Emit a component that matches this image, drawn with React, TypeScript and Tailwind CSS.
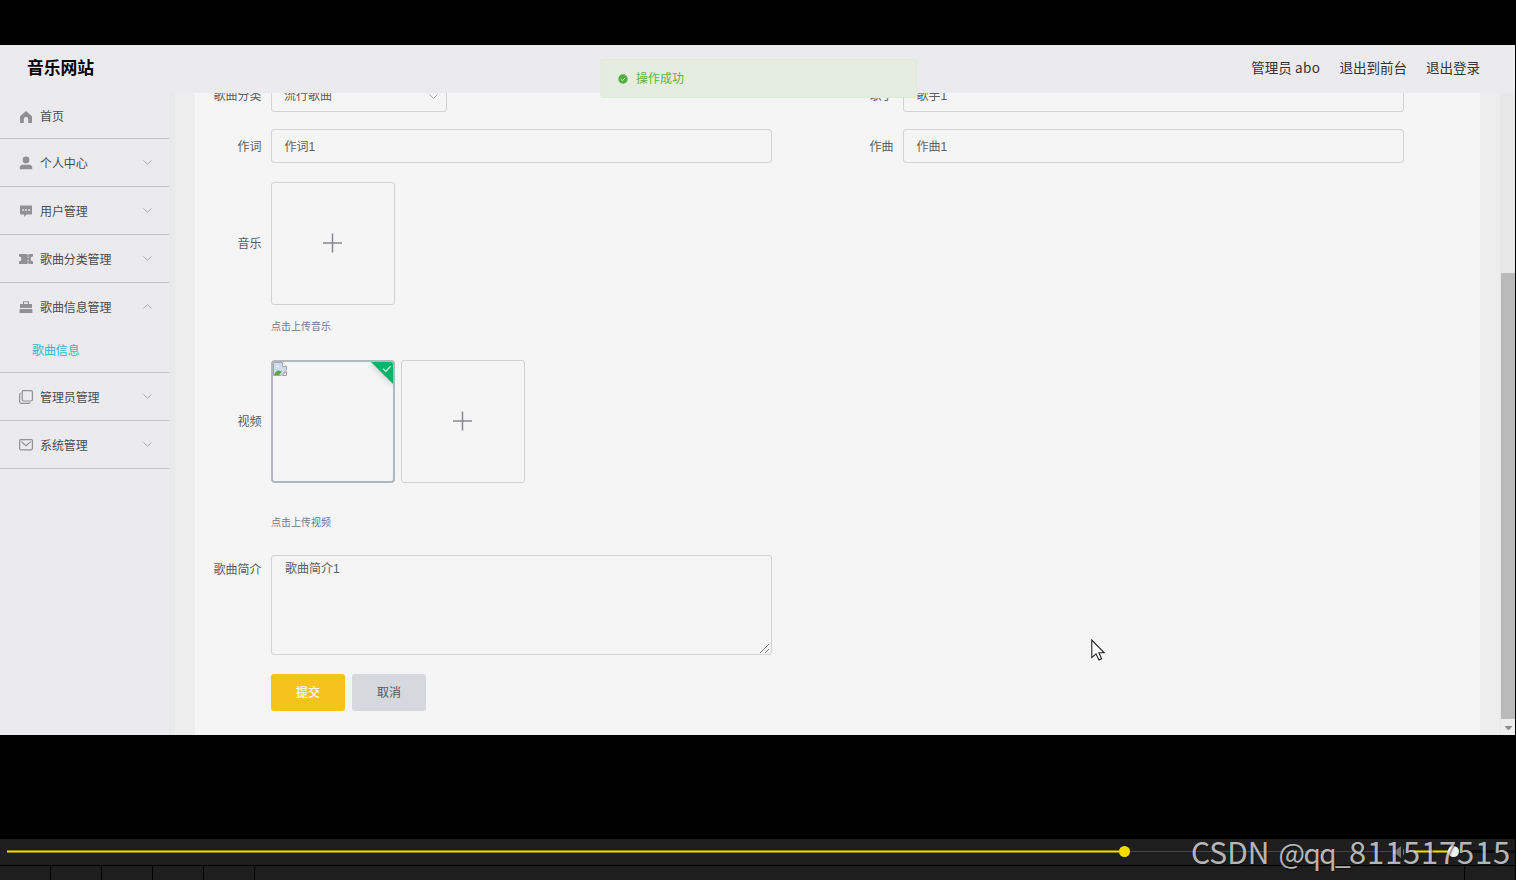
import type { ReactNode } from 'react';

type MenuItem = {
  label: string;
  icon: ReactNode;
  arrow?: 'up' | 'down';
  children?: string[];
};

const HomeIcon = () => (
  <svg className="mt-0.5 h-3.5 w-3.5" viewBox="0 0 14 14" fill="#919194">
    <path d="M7 1 L13 6.3 V13 H9.2 V9.3 a2.2 2.2 0 0 0-4.4 0 V13 H1 V6.3 Z" />
  </svg>
);

const UserIcon = () => (
  <svg className="mt-px h-3.5 w-3.5" viewBox="0 0 14 14" fill="#919194">
    <circle cx="7" cy="3.9" r="3.4" />
    <path d="M.8 13.2 V11.6 Q.8 8.8 4 8.8 H10 Q13.2 8.8 13.2 11.6 V13.2 Z" />
  </svg>
);

const CommentIcon = () => (
  <svg className="mt-px h-3.5 w-3.5" viewBox="0 0 14 14">
    <path d="M1 1.6 H13 V10.6 H7.6 L5.2 13 V10.6 H1 Z" fill="#919194" />
    <circle cx="4" cy="6" r=".9" fill="#ebebed" />
    <circle cx="7" cy="6" r=".9" fill="#ebebed" />
    <circle cx="10" cy="6" r=".9" fill="#ebebed" />
  </svg>
);

const TicketIcon = () => (
  <svg className="h-3.5 w-3.5" viewBox="0 0 14 14">
    <path d="M0 2 H8.6 V3.4 H9.6 V2 H14 V4.6 a2.2 2.2 0 0 0 0 4.8 V12 H9.6 V10.6 H8.6 V12 H0 V9.4 a2.4 2.4 0 0 0 0-4.8 Z" fill="#919194" />
    <path d="M9.1 4.6 V6.2 M9.1 7.8 V9.4" stroke="#ebebed" />
  </svg>
);

const BriefcaseIcon = () => (
  <svg className="h-3.5 w-3.5" viewBox="0 0 14 14">
    <path d="M4.5 4 V1.8 H9.5 V4" fill="none" stroke="#919194" strokeWidth="1.1" />
    <path d="M1 4 H13 V8 H1 Z M.6 8.9 H13.4 V13 H.6 Z" fill="#919194" />
  </svg>
);

const CopyIcon = () => (
  <svg className="h-3.5 w-3.5" viewBox="0 0 14 14" fill="none" stroke="#919194" strokeWidth="1.2">
    <rect x="3.2" y=".6" width="10.2" height="10.4" rx="1.4" />
    <path d="M1.8 3 Q.6 3.2 .6 4.6 V11.6 Q.6 13.4 2.4 13.4 H9.6 Q10.8 13.4 11.2 12.6" />
  </svg>
);

const MailIcon = () => (
  <svg className="h-3.5 w-3.5" viewBox="0 0 14 14" fill="none" stroke="#919194" strokeWidth="1.2">
    <rect x=".6" y="1.6" width="12.8" height="10.2" rx="1.2" />
    <path d="M2.2 3.6 L7 7.8 L11.8 3.6" />
  </svg>
);

const menu: MenuItem[] = [
  { label: '首页', icon: <HomeIcon /> },
  { label: '个人中心', icon: <UserIcon />, arrow: 'down' },
  { label: '用户管理', icon: <CommentIcon />, arrow: 'down' },
  { label: '歌曲分类管理', icon: <TicketIcon />, arrow: 'down' },
  { label: '歌曲信息管理', icon: <BriefcaseIcon />, arrow: 'up', children: ['歌曲信息'] },
  { label: '管理员管理', icon: <CopyIcon />, arrow: 'down' },
  { label: '系统管理', icon: <MailIcon />, arrow: 'down' },
];

function Chevron({ up = false }: { up?: boolean }) {
  return (
    <svg className="h-[5px] w-[9px]" viewBox="0 0 9 5" fill="none" stroke="#a3a4a8" strokeWidth=".9">
      <path d={up ? 'M.5 4.5 L4.5 .6 L8.5 4.5' : 'M.5 .5 L4.5 4.4 L8.5 .5'} />
    </svg>
  );
}

function Sidebar() {
  return (
    <aside className="w-[169px] shrink-0 bg-[#ebebed]">
      {menu.map((item, i) => (
        <div key={item.label} className="border-b border-[#c3c3c5]">
          <div className={`flex items-center pl-[19px] pr-[17px] ${i === 0 ? 'h-[45px]' : 'h-[47px]'}`}>
            {item.icon}
            <span className="ml-[7px] flex-1 pt-0.5 tracking-[-0.1px] text-[#4c4c4f]">{item.label}</span>
            {item.arrow && <Chevron up={item.arrow === 'up'} />}
          </div>
          {item.children?.map((child) => (
            <div key={child} className="flex h-[42px] items-center pl-8 tracking-[-0.1px] text-[#2bbcc4]">
              {child}
            </div>
          ))}
        </div>
      ))}
    </aside>
  );
}

function Field({ label, children, top = false }: { label: string; children: ReactNode; top?: boolean }) {
  return (
    <div className={`flex w-[632px] ${top ? 'items-start' : 'items-center'}`}>
      <label className={`mr-[9.5px] w-[66.5px] shrink-0 text-right text-[#5b5c5f] ${top ? 'pt-1.5' : 'pt-px'}`}>{label}</label>
      {children}
    </div>
  );
}

function TextInput({ value }: { value: string }) {
  return (
    <div className="flex h-[34px] w-[501px] items-center rounded-[3px] border border-[#d3d2d4] px-[12.5px] pt-0.5 text-[#5d5e61]">
      {value}
    </div>
  );
}

function UploadBox() {
  return (
    <div className="flex h-[123px] w-[124px] items-center justify-center rounded-[3px] border border-[#d3d1d4]">
      <svg className="mb-px h-5 w-5" viewBox="0 0 20 20" fill="none" stroke="#87898f" strokeWidth="1.5">
        <path d="M9.5 .5 V19.5 M0 10 H19" />
      </svg>
    </div>
  );
}

function UploadedFile() {
  return (
    <div className="relative h-[123px] w-[124px] overflow-hidden rounded-[4px] border-2 border-[#b3b7bd]">
      {/* broken preview */}
      <svg className="h-[14px] w-[14px]" viewBox="0 0 14 14">
        <path d="M.5 .5 H9.5 L13.5 4.5 V8 L8 13.5 H.5 Z" fill="#cfdcf5" stroke="#a4a6aa" />
        <path d="M1 13 Q3 8 6 8.5 L9 9.5 L6 13 Z" fill="#5aa83f" />
        <path d="M3 5 Q4.5 2.5 6 5 Z" fill="#fff" />
        <path d="M9.5 .5 V4.5 H13.5" fill="#fff" stroke="#a4a6aa" />
        <path d="M9 13.5 H13.5 V9.5 Z" fill="#f5f5f5" stroke="#a4a6aa" />
      </svg>
      <svg className="absolute right-0 top-0 h-[22px] w-[22px] drop-shadow-[0_1px_3px_rgba(0,0,0,0.2)]" viewBox="0 0 22 22">
        <path d="M0 0 H22 V22 Z" fill="#0bb36a" />
        <path d="M12 6.6 L14.8 9.4 L19.6 4.2" fill="none" stroke="#d9f6e8" strokeWidth="1.2" />
      </svg>
    </div>
  );
}

function SongForm() {
  return (
    <div className="w-[1285px] bg-[#f5f5f5]">
      <div className="-mt-[15px] flex">
        <Field label="歌曲分类">
          <div className="flex h-[34px] w-[176px] items-center justify-between rounded-[3px] border border-[#d3d2d4] pl-3 pr-2 pt-0.5 text-[#5d5e61]">
            流行歌曲
            <Chevron />
          </div>
        </Field>
        <Field label="歌手">
          <TextInput value="歌手1" />
        </Field>
      </div>

      <div className="mt-[17px] flex">
        <Field label="作词">
          <TextInput value="作词1" />
        </Field>
        <Field label="作曲">
          <TextInput value="作曲1" />
        </Field>
      </div>

      <div className="mt-[19px]">
        <Field label="音乐">
          <UploadBox />
        </Field>
        <p className="ml-[76px] mt-[14px] text-[10px] leading-[16px] text-[#6f7890]">点击上传音乐</p>
      </div>

      <div className="mt-[25px]">
        <Field label="视频">
          <div className="flex gap-1.5">
            <UploadedFile />
            <UploadBox />
          </div>
        </Field>
        <p className="ml-[76px] mt-8 text-[10px] leading-[16px] text-[#6f7890]">点击上传视频</p>
      </div>

      <div className="mt-6">
        <Field label="歌曲简介" top>
          <div className="relative h-[100px] w-[501px] rounded-[3px] border border-[#d3d2d4] px-[13px] pt-1 text-[#5d5e61]">
            歌曲简介1
            <svg className="absolute bottom-px right-0.5 h-[9px] w-[9px]" viewBox="0 0 9 9" stroke="#6c6c6c" strokeWidth=".9">
              <path d="M0 9 L9 0 M5 9 L9 5" />
            </svg>
          </div>
        </Field>
      </div>

      <div className="ml-[76px] mt-[19px] flex gap-[7px]">
        <button className="h-[37px] w-[74px] rounded-[3px] bg-[#f6c21d] font-medium text-white">提交</button>
        <button className="h-[37px] w-[74px] rounded-[3px] bg-[#d5d8dc] text-[#55565a]">取消</button>
      </div>
    </div>
  );
}

function Toast() {
  return (
    <div className="absolute left-[600px] top-[14px] flex h-[39px] w-[317px] items-center rounded-[3px] border border-[#dfebd9] bg-[#e5ede0] pl-[17px] text-[#5cb447]">
      <svg className="mr-2 h-[10px] w-[10px]" viewBox="0 0 10 10">
        <circle cx="5" cy="5" r="4.7" fill="#4fb03c" />
        <path d="M2.7 5.1 L4.4 6.7 L7.3 3.7" fill="none" stroke="#e5ede0" strokeWidth="1" />
      </svg>
      操作成功
    </div>
  );
}

function PlayerBar() {
  return (
    <div className="h-[41px] w-[1515px]">
      <div className="flex h-[26px] items-center bg-[#1e1e1e] pb-px pl-[7px]">
        <div className="h-[3px] w-[1112px] border-y border-[#8f8000] bg-[#f0dc00]" />
        <div className="h-[11px] w-[11px] rounded-full bg-[#f5dc00]" />
        <div className="h-px w-[262px] bg-[#484848]" />
        <svg className="h-3 w-4" viewBox="0 0 16 12" fill="#777">
          <path d="M1 4 H4 L9 0 V12 L4 8 H1 Z M11 3 H12 V9 H11 Z" />
        </svg>
        <div className="ml-1.5 h-[3px] w-[34px] border-y border-[#8f8000] bg-[#f0dc00]" />
        <div className="h-[11px] w-[11px] rounded-full bg-[#efefef]" />
        <div className="h-[3px] flex-1 bg-[#0d0d0d]" />
      </div>
      <div className="mt-px flex h-[14px] gap-px">
        {[0, 1, 2, 3, 4].map((n) => (
          <div key={n} className="w-[50px] bg-[#1e1e1e]" />
        ))}
        <div className="flex-1 bg-[#1e1e1e]" />
        <div className="w-[50px] bg-[#1e1e1e]" />
      </div>
    </div>
  );
}

export default function App() {
  return (
    <div className="relative flex h-[880px] w-[1516px] flex-col overflow-hidden bg-black pt-[45px] font-['Liberation_Sans','Noto_Sans_CJK_SC',sans-serif] text-[12px] leading-[18px]">
      <div className="relative flex h-[690px] w-[1515px] flex-col overflow-hidden bg-[#ededed]">
        <header className="flex h-12 shrink-0 items-center justify-between bg-[#ebebed] pb-1 pl-[27px] pr-[35px] font-['Noto_Sans_CJK_SC',sans-serif]">
          <h1 className="text-[16.8px] font-bold text-black">音乐网站</h1>
          <nav className="flex gap-[19px] text-[13.5px] text-[#333336]">
            <span>
              管理员 <span className="tracking-[0.5px]">abo</span>
            </span>
            <span>退出到前台</span>
            <span>退出登录</span>
          </nav>
        </header>

        <div className="flex min-h-0 flex-1">
          <Sidebar />
          <main className="flex flex-1 overflow-hidden border-l-[6px] border-[#e8eae9] pl-5">
            <SongForm />
          </main>
          <div className="flex w-[15px] flex-col bg-[#e7e7e7] pl-px">
            <div className="mt-[180px] h-[446px] bg-[#bababa]" />
            <svg className="h-4 w-[14px]" viewBox="0 0 14 16">
              <rect width="14" height="16" fill="#ededed" />
              <path d="M3.5 7 H11.5 L7.5 11.5 Z" fill="#8c8c8c" />
            </svg>
          </div>
        </div>

        <Toast />
        <svg className="absolute left-[1091px] top-[594px] h-[22px] w-[14px]" viewBox="0 0 14 22">
          <path d="M.8 1 V18.6 L5 14.8 L8 21 L10.6 19.8 L7.9 13.8 H13.2 Z" fill="#fff" stroke="#222" strokeWidth="1.1" />
        </svg>
      </div>

      <div className="h-[104px] shrink-0" />
      <PlayerBar />

      <div className="absolute left-[1191px] top-[831px] flex items-baseline whitespace-nowrap font-['Noto_Sans_CJK_SC',sans-serif] text-[30px] leading-[40px] text-white/70 [text-shadow:1px_1px_1px_rgba(0,0,0,0.5)]">
        <span>CSDN</span>
        <span className="ml-[9px] text-[28px] tracking-[-1.6px]">@qq_</span>
        <span className="text-[31px] tracking-[0.8px]">811517515</span>
      </div>
    </div>
  );
}
